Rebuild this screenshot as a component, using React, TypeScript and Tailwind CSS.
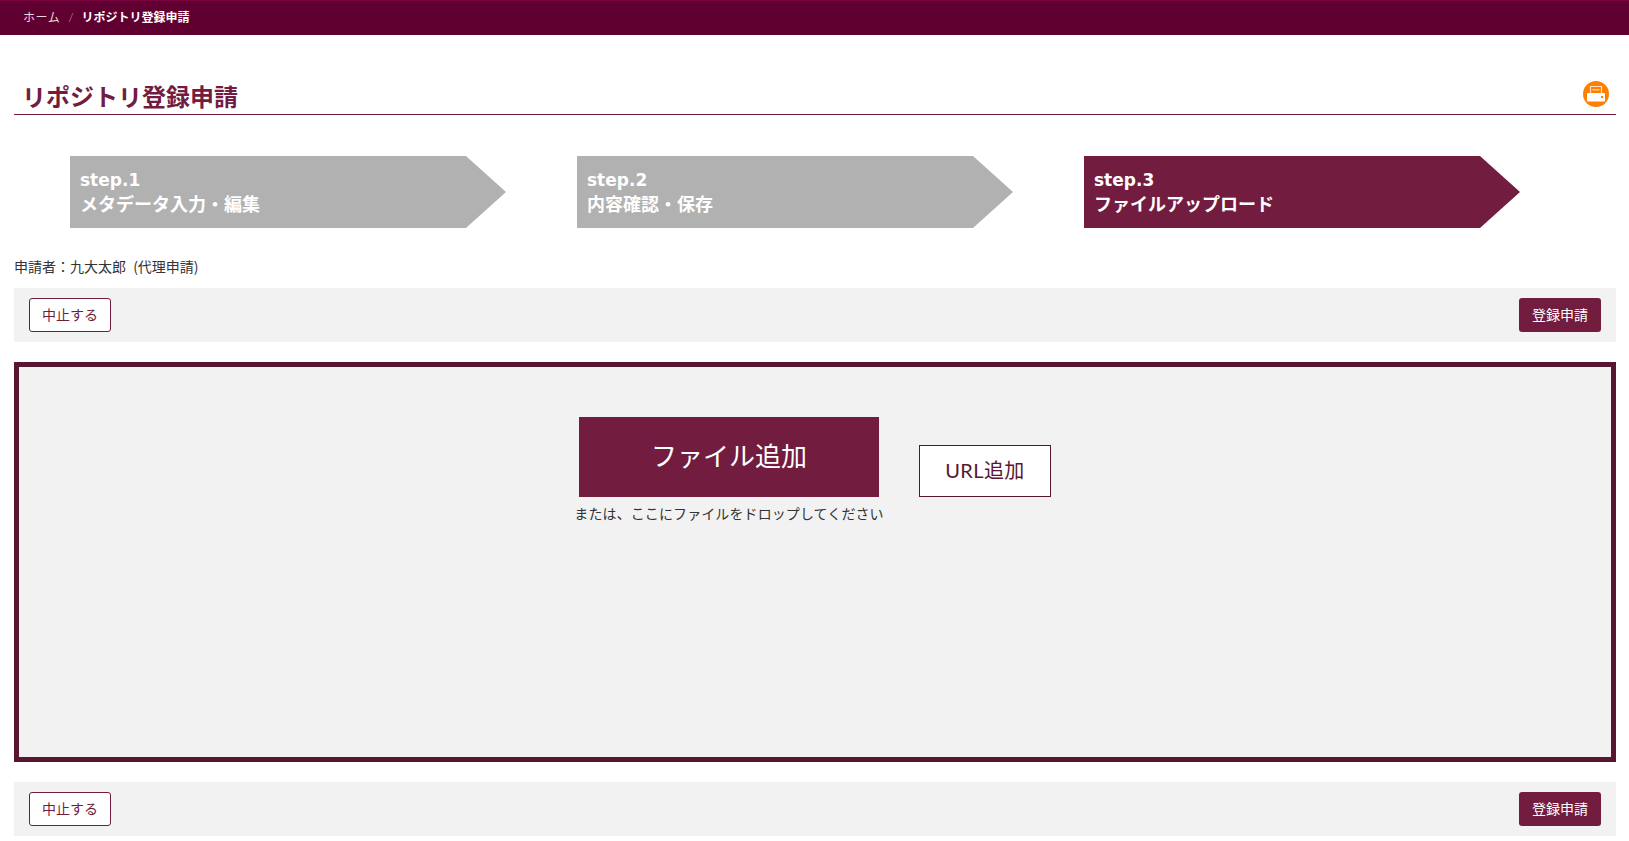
const jp = "font-['Lato','Noto_Sans_CJK_JP',sans-serif]";

const steps = [
  { no: 'step.1', label: 'メタデータ入力・編集', active: false },
  { no: 'step.2', label: '内容確認・保存', active: false },
  { no: 'step.3', label: 'ファイルアップロード', active: true },
];

function PrintIcon() {
  return (
    <svg className="mb-[5px]" width="26" height="26" viewBox="0 0 26 26" aria-hidden="true">
      <circle cx="13" cy="13" r="13" fill="#ff8000" />
      <path d="M7.5 12V5.5h11V12" fill="none" stroke="#ffe2bd" strokeWidth="1.2" />
      <path d="M9.5 8.8h7" stroke="#ffe2bd" strokeWidth="1.2" />
      <rect x="4" y="12" width="18" height="8.5" rx="1" fill="#fff" />
      <rect x="18" y="15" width="2" height="2" fill="#ff8000" />
    </svg>
  );
}

function ActionBar() {
  return (
    <div className="flex h-[54px] items-center justify-between bg-[#f2f2f2] px-[15px]">
      <button className="h-[34px] w-[82px] rounded-[3px] border border-[#721d3f] bg-white text-sm text-[#721d3f]">
        中止する
      </button>
      <button className="h-[34px] w-[82px] rounded-[3px] bg-[#721d3f] text-sm text-white">
        登録申請
      </button>
    </div>
  );
}

export default function App() {
  return (
    <div className={`${jp} h-[841px] overflow-hidden bg-white text-sm text-[#333]`}>
      <nav className="flex h-[35px] items-center border-t border-[#7a0040] bg-[#600030] pl-[23px] text-xs">
        <span className="tracking-[0.5px] text-[#e8d5dd]">ホーム</span>
        <span className="mx-[8px] text-[#a07088]">/</span>
        <span className="font-bold text-white">リポジトリ登録申請</span>
      </nav>

      <main className="pr-[13px] pl-[14px]">
        <div className="mt-[44px] flex h-[36px] items-center justify-between border-b border-[#721d3f] pr-[7px] pl-[8px]">
          <h1 className="text-2xl leading-[35px] font-bold text-[#721d3f]">リポジトリ登録申請</h1>
          <PrintIcon />
        </div>

        <div className="mt-[41px] flex gap-[71px] pl-[56px]">
          {steps.map((step) => (
            <div
              key={step.no}
              className={`flex h-[72px] w-[436px] flex-col justify-center pl-[10px] text-lg leading-[24px] font-bold text-white [clip-path:polygon(0_0,calc(100%-40px)_0,100%_50%,calc(100%-40px)_100%,0_100%)] ${
                step.active ? 'bg-[#721d3f]' : 'bg-[#b1b1b1]'
              }`}
            >
              <span className="font-['DejaVu_Sans',sans-serif] text-[17px]">{step.no}</span>
              <span>{step.label}</span>
            </div>
          ))}
        </div>

        <p className="mt-[28px] h-[32px] font-['Noto_Sans_CJK_JP',sans-serif] leading-[20px] [word-spacing:4px]">
          申請者：九大太郎 (代理申請)
        </p>

        <ActionBar />

        <section className="mt-5 flex h-[400px] justify-center gap-[40px] border-[5px] border-[#581631] bg-[#f2f2f2] pt-[50px]">
          <div className="flex w-[300px] flex-col items-center">
            <button className="h-[80px] w-[300px] bg-[#721d3f] text-[26px] text-white">
              ファイル追加
            </button>
            <p className="mt-[7px] whitespace-nowrap leading-[20px] tracking-[0.1px]">
              または、ここにファイルをドロップしてください
            </p>
          </div>
          <button className="mt-[28px] h-[52px] w-[132px] border border-[#581631] bg-white pb-[2px] text-xl tracking-[0.4px] text-[#581631]">
            URL追加
          </button>
        </section>

        <div className="mt-5">
          <ActionBar />
        </div>
      </main>
    </div>
  );
}
